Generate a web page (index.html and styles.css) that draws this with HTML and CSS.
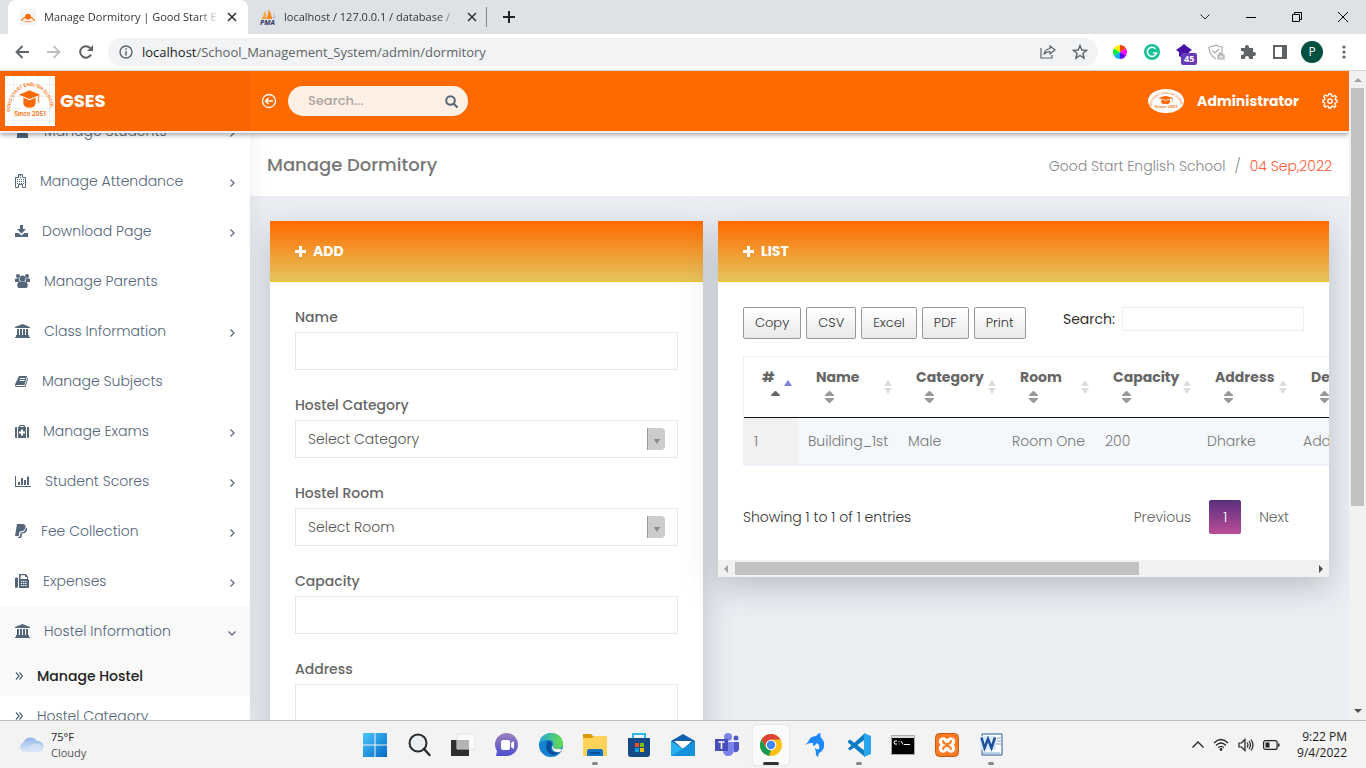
FILE: index.html
```html
<!DOCTYPE html>
<html lang="en">
<head>
<meta charset="utf-8">
<title>Manage Dormitory | Good Start English School</title>
<link rel="stylesheet" href="styles.css">
</head>
<body>
<svg class="defs" aria-hidden="true">
  <defs>
    <symbol id="cap" viewBox="0 0 24 20"><path d="M12 0 24 5 12 10 0 5z"/><path d="M5 8.500 12 11.500 19 8.500V15q-1 5-7 5t-7-5z"/><path d="M22 5.500h1V14h-1z"/></symbol>
    <symbol id="logo" viewBox="0 0 50 50">
      <rect width="50" height="50" fill="#fff"/>
      <path d="M0 8.500H50M0 20.500H50M0 32.500H50M0 44.500H50M8.500 0V50M20.500 0V50M32.500 0V50M44.500 0V50" stroke="#f1f1f1" fill="none"/>
      <path id="arc" d="M5 36A20.500 26 0 0 1 46 36" fill="none"/>
      <text class="logo-text" font-size="4.400"><textPath href="#arc" startOffset="0">GOOD START ENGLISH SCHOOL</textPath></text>
      <svg x="14" y="14" width="21" height="18" fill="#ff6a00"><use href="#cap"/></svg>
      <text class="logo-text" x="25" y="40" font-size="6" text-anchor="middle">Since 2051</text>
    </symbol>
    <symbol id="chev" viewBox="0 0 8 10"><path d="M2.500 1.500 6 5 2.500 8.500" fill="none" stroke="#54667a" stroke-width="1.200"/></symbol>
    <symbol id="dbl" viewBox="0 0 8 8"><path d="M1 .5 4 4 1 7.500M4.500.5l3 3.500-3 3.500" fill="none" stroke="#54667a" stroke-width="1.200"/></symbol>
    <symbol id="bank" viewBox="0 0 15 14"><path d="M7.500 0 15 3v1H0V3zM1 12h13v1h1v1H0v-1h1zM2 5h2v6h1V5h2v6h1V5h2v6h1V5h2v6h1v1H1v-1h1z"/></symbol>
    <symbol id="plus" viewBox="0 0 11 11"><path d="M4 0h3v4h4v3H7v4H4V7H0V4h4z"/></symbol>
    <symbol id="sort" viewBox="0 0 9 12"><path d="M4 0h1l4 4v1H0V4zM0 7h9v1l-4 4H4L0 8z"/></symbol>
    <symbol id="sorts" viewBox="0 0 8 14"><path d="M4 0 8 6H0zM0 8h8l-4 6z"/></symbol>
    <symbol id="x" viewBox="0 0 10 10"><path d="M1 1l8 8M9 1 1 9" stroke="#333" stroke-width="1.600"/></symbol>
  </defs>
</svg>

<div class="tabstrip">
  <div class="tab active">
    <svg width="16" height="16" viewBox="0 0 50 50"><rect width="50" height="50" fill="#f7f5f4"/><path d="M5 37A22 22 0 0 1 45 37" fill="none" stroke="#ff8a3a" stroke-width="5"/><circle cx="25" cy="24" r="9" fill="#ff6a00"/><path d="M14 39h22" stroke="#ffa567" stroke-width="4"/></svg>
    <span class="tab-title">Manage Dormitory | Good Start E</span>
    <button aria-label="Close tab"><svg width="10" height="10"><use href="#x"/></svg></button>
  </div>
  <div class="tab">
    <svg width="16" height="16" viewBox="0 0 16 16"><path d="M1 10Q4 7 5 1q2 5 1 9z" fill="#f9a545"/><path d="M6 10q3-5 2-10 4 5 4 10z" fill="#f68a1f"/><path d="M12 10q2-4 1-7 3 4 3 7z" fill="#c9c9d5"/><text x="0" y="16" class="pma">PMA</text></svg>
    <span class="tab-title">localhost / 127.0.0.1 / database /</span>
    <button aria-label="Close tab"><svg width="10" height="10"><use href="#x"/></svg></button>
  </div>
  <span class="tab-sep"></span>
  <button class="newtab" aria-label="New tab"><svg width="12" height="12" viewBox="0 0 12 12"><path d="M6 0v12M0 6h12" stroke="#222" stroke-width="2"/></svg></button>
  <div class="winctl">
    <button aria-label="Search tabs"><svg width="10" height="6" viewBox="0 0 10 6"><path d="M.5.5 5 5 9.500.5" fill="none" stroke="#222"/></svg></button>
    <button aria-label="Minimize"><svg width="10" height="10"><path d="M0 5.500h10" stroke="#000"/></svg></button>
    <button aria-label="Restore"><svg width="10" height="10" fill="none" stroke="#000"><path d="M.5 2.500h7v7h-7zM2.500 2.500v-2h7v7h-2"/></svg></button>
    <button aria-label="Close"><svg width="10" height="10" viewBox="0 0 10 10"><path d="M0 0l10 10M10 0 0 10" stroke="#000"/></svg></button>
  </div>
</div>

<div class="toolbar">
  <button aria-label="Back"><svg width="14" height="14" viewBox="0 0 14 14" fill="none" stroke="#5f6368" stroke-width="1.800"><path d="M14 7H1.500M7.500 1l-6 6 6 6"/></svg></button>
  <button aria-label="Forward"><svg width="14" height="14" viewBox="0 0 14 14" fill="none" stroke="#bdc0c3" stroke-width="1.800"><path d="M0 7h12.500M6.500 1l6 6-6 6"/></svg></button>
  <button aria-label="Reload"><svg width="14" height="14" viewBox="0 0 14 14"><path d="M12 9.500A5.700 5.700 0 1 1 11.200 3.200" fill="none" stroke="#5f6368" stroke-width="2"/><path d="M14 0v6H8z" fill="#5f6368"/></svg></button>
  <div class="omnibox">
    <svg width="14" height="14" viewBox="0 0 14 14"><circle cx="7" cy="7" r="6" fill="none" stroke="#5f6368" stroke-width="1.400"/><path d="M7 6.200v4.300M7 3.300v1.500" stroke="#5f6368" stroke-width="1.500"/></svg>
    <span class="url"><b>localhost</b>/School_Management_System/admin/dormitory</span>
    <button aria-label="Share"><svg width="16" height="14" viewBox="0 0 16 14" fill="none" stroke="#5f6368" stroke-width="1.200"><path d="M1 3v10h11v-3M10 1l5 4-5 4V6.500Q6 6.500 4 9.500q.5-5 6-6z"/></svg></button>
    <button aria-label="Bookmark"><svg width="16" height="16" viewBox="0 0 16 16"><path d="M8 1.500 9.800 6l4.800.3-3.700 3.100 1.200 4.700L8 11.500l-4.100 2.600 1.200-4.700L1.400 6.300 6.200 6z" fill="none" stroke="#5f6368" stroke-width="1.400"/></svg></button>
  </div>
  <div class="exts">
    <button aria-label="Colour picker"><svg width="16" height="16" viewBox="-8 -8 16 16"><g stroke-width="7" fill="none"><path d="M0-3.500A3.500 3.500 0 0 1 3-1.700" stroke="#e40"/><path d="M3-1.700A3.500 3.500 0 0 1 3 1.700" stroke="#f0f"/><path d="M3 1.700A3.500 3.500 0 0 1 0 3.500" stroke="#60f"/><path d="M0 3.500A3.500 3.500 0 0 1-3 1.700" stroke="#0af"/><path d="M-3 1.700A3.500 3.500 0 0 1-3-1.700" stroke="#0e3"/><path d="M-3-1.700A3.500 3.500 0 0 1 0-3.500" stroke="#fe0"/></g></svg></button>
    <button aria-label="Grammarly"><svg width="16" height="16" viewBox="0 0 16 16"><circle cx="8" cy="8" r="8" fill="#15c39a"/><path d="M11.500 4.800A4.600 4.600 0 1 0 12.500 9H9" fill="none" stroke="#fff" stroke-width="1.500"/></svg></button>
    <button class="counter" aria-label="Extension"><svg width="16" height="16" viewBox="0 0 16 16"><path d="M8 0l3 2.500L16 6l-3 2v4l-5 3-5-3V8L0 6l5-3.500z" fill="#4a10a8"/></svg><span>45</span></button>
    <button aria-label="Shield"><svg width="17" height="16" viewBox="0 0 17 16" fill="none" stroke="#aaa" stroke-width="1.200"><path d="M8 15Q1 11 1 3q4 0 7-2 3 2 6 2v5M4.500 6.500l2.500 2.500 4-4"/><path d="M10 11h6v4h-6zM11.500 11V9h3v2" fill="#ddd"/></svg></button>
    <button aria-label="Extensions"><svg width="16" height="16" viewBox="0 0 16 16" fill="#5f6368"><path d="M1 4h4V3a2 2 0 0 1 4 0v1h4v4h1a2 2 0 0 1 0 4h-1v3H9v-1a2 2 0 0 0-4 0v1H1v-4h1a2 2 0 0 0 0-4H1z"/></svg></button>
    <button aria-label="Side panel"><svg width="14" height="14" viewBox="0 0 14 14"><path d="M0 0h14v14H0zM2 2v10h7V2z" fill="#5f6368" fill-rule="evenodd"/></svg></button>
    <button class="avatar" aria-label="Profile">P</button>
    <button aria-label="Menu"><svg width="4" height="14" viewBox="0 0 4 14" fill="#5f6368"><circle cx="2" cy="2" r="1.600"/><circle cx="2" cy="7" r="1.600"/><circle cx="2" cy="12" r="1.600"/></svg></button>
  </div>
</div>

<div class="viewport">
  <div class="app">
    <header class="topbar">
      <a class="brand" href="#"><svg width="50" height="50"><use href="#logo"/></svg>GSES</a>
      <button class="collapse" aria-label="Toggle menu"><svg width="16" height="16" viewBox="0 0 16 16" fill="none" stroke="#fff" stroke-width="1.300"><circle cx="8" cy="8" r="6.500"/><path d="M12 8H4.500M7.500 5l-3 3 3 3"/></svg></button>
      <form class="find">
        <input type="text" placeholder="Search..." aria-label="Search">
        <button type="button" aria-label="Search"><svg width="13" height="13" viewBox="0 0 13 13" fill="none" stroke="#54667a" stroke-width="2"><circle cx="5.500" cy="5.500" r="4.300"/><path d="M8.700 8.700l4 4"/></svg></button>
      </form>
      <a class="user" href="#"><svg width="36" height="24" viewBox="0 0 50 50" preserveAspectRatio="none"><use href="#logo"/></svg>Administrator</a>
      <button class="gear" aria-label="Settings"><svg width="16" height="16" viewBox="-8 -8 16 16" fill="none" stroke="#fff" stroke-width="1.300"><path d="M-1.300-7h2.600l.5 2 1.400.6L5-5.500 6.500-4 5.100-2.200 5.600-1 7-.7v2l-1.700.4-.6 1.400 1.200 1.800L4.500 6.300 2.700 5.100 1.300 5.600 1 7h-2.200l-.5-1.600L-3 5l-1.700 1.200-1.500-1.500L-5.100 3l-.6-1.400L-7 1.300v-2.200l1.600-.4L-5-2.700-6.200-4.500-4.700-6-3-5l1.300-.4z"/><circle r="2.200"/></svg></button>
    </header>

    <div class="columns">
      <nav class="sidebar">
        <ul>
          <li><a href="#"><svg width="15" height="14" viewBox="0 0 15 14"><circle cx="7.500" cy="4" r="3"/><path d="M2 14q-1-7 5.500-7T13 14z"/></svg>Manage Students<svg class="chev"><use href="#chev"/></svg></a></li>
          <li><a href="#"><svg width="11" height="14" viewBox="0 0 11 14"><path d="M.5 3.500h3v-3h4v3h3v10h-3v-3h-4v3h-3z" fill="none" stroke="#54667a"/><path d="M4.500 2h2M5.500 1v3M2 5.500h7M2 7.500h7M2 9.500h7" fill="none" stroke="#54667a" stroke-dasharray="1 1"/></svg>Manage Attendance<svg class="chev"><use href="#chev"/></svg></a></li>
          <li><a href="#"><svg width="13" height="13" viewBox="0 0 13 13"><path d="M5 0h3v4h3L6.500 8.500 2 4h3zM0 8h3.500l3 2.500 3-2.500H13v4H0z"/></svg>Download Page<svg class="chev"><use href="#chev"/></svg></a></li>
          <li><a href="#"><svg width="15" height="14" viewBox="0 0 15 14"><circle cx="3" cy="2" r="2"/><circle cx="12" cy="2" r="2"/><circle cx="7.500" cy="4.500" r="3"/><path d="M0 8V5q1.500-1 4-.5Q4 7 5 8zM15 8V5q-1.500-1-4-.5Q11 7 10 8zM2.500 13q-1-5 2.500-5.500h5Q13.500 8 12.500 13 12 14 11 14H4q-1 0-1.500-1z"/></svg>Manage Parents</a></li>
          <li><a href="#"><svg width="15" height="14"><use href="#bank"/></svg>Class Information<svg class="chev"><use href="#chev"/></svg></a></li>
          <li><a href="#"><svg width="13" height="13" viewBox="0 0 13 13"><path d="M4 1h8l-2.500 9H2q-1 0-.8 1h8.600L12.500 2.500q1 .5.300 2L10.500 12H1q-1.500-1-.8-3z"/><path d="M5 3.500h5M4.500 5.500h5" stroke="#fff"/></svg>Manage Subjects</a></li>
          <li><a href="#"><svg width="14" height="13" viewBox="0 0 14 13"><path d="M4 2q0-2 1-2h4q1 0 1 2h1v11H3V2zm1.300 0h3.400V1H5.300zM2 2v11H1q-1 0-1-1V3q0-1 1-1zM12 2h1q1 0 1 1v9q0 1-1 1h-1z"/><path d="M7 4.500v6M4 7.500h6" stroke="#fff" stroke-width="2"/></svg>Manage Exams<svg class="chev"><use href="#chev"/></svg></a></li>
          <li><a href="#"><svg width="16" height="13" viewBox="0 0 16 13"><path d="M0 1h1v10h15v1H0zM3 7h2v3H3zM6 3h2v7H6zM9 5h2v5H9zM12 1.500h2V10h-2z"/></svg>Student Scores<svg class="chev"><use href="#chev"/></svg></a></li>
          <li><a href="#"><svg width="12" height="14" viewBox="0 0 12 14"><path d="M2 0h6q3.500.5 2.300 4Q9 7.500 4.500 7.500L3.700 12H0z"/><path d="M11 3.500q2 1 .5 4-1 2-4.500 2L6.300 14H3l.3-1.200h1.500L5.700 8.500Q10 8.500 11 3.500z"/></svg>Fee Collection<svg class="chev"><use href="#chev"/></svg></a></li>
          <li><a href="#"><svg width="14" height="14" viewBox="0 0 14 14"><path d="M0 4q1-1.500 3 0v9q-1 1-2 1t-1-1zM4 0h7l2 2.500V5l1 1v7q0 1-1 1H4zM5.500 1.200V5H12V3h-2V1.200z" fill-rule="evenodd"/><path d="M6 7.500h6M6 9.500h6M6 11.500h6" stroke="#fff" stroke-dasharray="1.300 .8"/></svg>Expenses<svg class="chev"><use href="#chev"/></svg></a></li>
          <li class="open"><a href="#"><svg width="15" height="14"><use href="#bank"/></svg>Hostel Information<svg class="chev"><use href="#chev"/></svg></a>
            <ul>
              <li class="current"><a href="#"><svg width="8" height="8"><use href="#dbl"/></svg>Manage Hostel</a></li>
              <li><a href="#"><svg width="8" height="8"><use href="#dbl"/></svg>Hostel Category</a></li>
            </ul>
          </li>
        </ul>
      </nav>

      <main>
        <div class="titlebar">
          <h1>Manage Dormitory</h1>
          <div class="crumbs"><a href="#">Good Start English School</a><span>/</span><b>04 Sep,2022</b></div>
        </div>
        <div class="cards">
          <section class="card">
            <h2><svg width="11" height="11"><use href="#plus"/></svg>ADD</h2>
            <form class="body">
              <div class="field"><label for="name">Name</label><input id="name" type="text"></div>
              <div class="field"><label for="cat">Hostel Category</label><div class="pick"><select id="cat"><option>Select Category</option></select><i></i></div></div>
              <div class="field"><label for="room">Hostel Room</label><div class="pick"><select id="room"><option>Select Room</option></select><i></i></div></div>
              <div class="field"><label for="capacity">Capacity</label><input id="capacity" type="text"></div>
              <div class="field"><label for="address">Address</label><input id="address" type="text"></div>
            </form>
          </section>
          <section class="card">
            <h2><svg width="11" height="11"><use href="#plus"/></svg>LIST</h2>
            <div class="body list">
              <div class="tools">
                <button>Copy</button><button>CSV</button><button>Excel</button><button>PDF</button><button>Print</button>
                <label for="q">Search:</label><input id="q" type="search">
              </div>
              <table>
                <colgroup><col class="c-num"><col class="c-name"><col class="c-cat"><col class="c-room"><col class="c-cap"><col class="c-addr"><col class="c-desc"></colgroup>
                <thead><tr>
                  <th><div><span>#<svg class="s1 up" viewBox="0 0 9 12"><path d="M4 0h1l4 4v1H0V4z"/></svg></span><svg class="s2 on" viewBox="0 0 8 14"><path d="M4 0 8 6H0z"/></svg></div></th>
                  <th><div><span>Name<svg class="s1"><use href="#sort"/></svg></span><svg class="s2"><use href="#sorts"/></svg></div></th>
                  <th><div><span>Category<svg class="s1"><use href="#sort"/></svg></span><svg class="s2"><use href="#sorts"/></svg></div></th>
                  <th><div><span>Room<svg class="s1"><use href="#sort"/></svg></span><svg class="s2"><use href="#sorts"/></svg></div></th>
                  <th><div><span>Capacity<svg class="s1"><use href="#sort"/></svg></span><svg class="s2"><use href="#sorts"/></svg></div></th>
                  <th><div><span>Address<svg class="s1"><use href="#sort"/></svg></span><svg class="s2"><use href="#sorts"/></svg></div></th>
                  <th><div><span>Description<svg class="s1"><use href="#sort"/></svg></span><svg class="s2"><use href="#sorts"/></svg></div></th>
                </tr></thead>
                <tbody><tr><td>1</td><td>Building_1st</td><td>Male</td><td>Room One</td><td>200</td><td>Dharke</td><td>Address</td></tr></tbody>
              </table>
              <div class="pager">
                <p>Showing 1 to 1 of 1 entries</p>
                <a href="#">Previous</a><a class="page" href="#">1</a><a href="#">Next</a>
              </div>
            </div>
            <div class="hscroll"><svg width="4" height="8" viewBox="0 0 4 8"><path d="M4 0v8L0 4z" fill="#a3a3a3"/></svg><span><i></i></span><svg width="4" height="8" viewBox="0 0 4 8"><path d="M0 0v8l4-4z" fill="#505050"/></svg></div>
          </section>
        </div>
      </main>
    </div>
  </div>
  <div class="vscroll"><svg width="8" height="4" viewBox="0 0 8 4"><path d="M0 4h8L4 0z" fill="#a3a3a3"/></svg><span><i></i></span><svg width="8" height="4" viewBox="0 0 8 4"><path d="M0 0h8L4 4z" fill="#505050"/></svg></div>
</div>

<footer class="taskbar">
  <div class="weather">
    <svg width="25" height="17" viewBox="0 0 25 17"><defs><linearGradient id="cl" x2="0" y2="1"><stop stop-color="#8fb4e8"/><stop offset="1" stop-color="#dfe9f7"/></linearGradient></defs><path d="M5 16A5 5 0 0 1 4.500 6.500 7.500 7.500 0 0 1 18 5a5.500 5.500 0 0 1 2 11z" fill="url(#cl)"/><path d="M12 16q-4-7 3-8 6-1 8 4-.5 4-4 4z" fill="#d8e4f6" opacity=".8"/></svg>
    <p>75°F<small>Cloudy</small></p>
  </div>
  <div class="apps">
    <button aria-label="Start"><svg width="24" height="24" viewBox="0 0 24 24"><defs><linearGradient id="w" x2="1" y2="1"><stop stop-color="#4cc8fb"/><stop offset="1" stop-color="#0068c8"/></linearGradient></defs><path d="M0 0h11.500v11.500H0zM12.500 0H24v11.500H12.500zM0 12.500h11.500V24H0zM12.500 12.500H24V24H12.500z" fill="url(#w)"/></svg></button>
    <button aria-label="Search"><svg width="24" height="24" viewBox="0 0 24 24"><circle cx="11" cy="10" r="8.500" fill="#e9eef2" stroke="#2b2b2b" stroke-width="2"/><path d="M17 16l5.500 6" stroke="#2b2b2b" stroke-width="2.500" stroke-linecap="round"/></svg></button>
    <button aria-label="Task view"><svg width="24" height="24" viewBox="0 0 24 24"><path d="M0 7h18v16H0z" fill="#2d2d2b"/><path d="M6 1h18v15H6z" fill="#fafafa" stroke="#e2e2e2"/><path d="M6 7h12v9H6z" fill="#b4b4b4"/></svg></button>
    <button aria-label="Chat"><svg width="24" height="24" viewBox="0 0 24 24"><defs><linearGradient id="ch" x2="0" y2="1"><stop stop-color="#9b7fbd"/><stop offset="1" stop-color="#4c51d0"/></linearGradient></defs><path d="M1 23l1-5A11.500 11.500 0 1 1 12 23z" fill="url(#ch)"/><rect x="6" y="7" width="9" height="10" rx="2" fill="#fff"/><path d="M16 10l3-2v8l-3-2z" fill="#fff"/></svg></button>
    <button aria-label="Edge"><svg width="24" height="24" viewBox="0 0 24 24"><defs><linearGradient id="e1"><stop stop-color="#25a6dc"/><stop offset="1" stop-color="#67df45"/></linearGradient></defs><circle cx="12" cy="12" r="12" fill="#1380d0"/><path d="M0 11Q2 0 13 0q10 1 11 10 0 6-6 6-5 0-4-4 1-5-5-5-6 0-9 4z" fill="url(#e1)"/><path d="M9 8Q4 15 11 21q6 3 10-2-8 2-9-4 0-3 1-4-1-3-4-3z" fill="#0b4e9c"/><path d="M14 12q-1 4 4 4h5.500L21 19q-8 1-8-5z" fill="#f2f2f2"/></svg></button>
    <button class="run" aria-label="File Explorer"><svg width="24" height="22" viewBox="0 0 24 22"><path d="M0 0h8l2 2h14v20H0z" fill="#d99a0c"/><path d="M0 4h9l2-2h13v20H0z" fill="#ffd35a"/><path d="M4 22v-5q0-2 2-2h12q2 0 2 2v5z" fill="#1670c4"/><path d="M7 18h10v2H7z" fill="#0b4f96"/></svg></button>
    <button aria-label="Store"><svg width="24" height="24" viewBox="0 0 24 24"><path d="M6 6V1h12v5" fill="none" stroke="#2fb9ea" stroke-width="2"/><path d="M1 5h22v16q0 3-3 3H4q-3 0-3-3z" fill="#164a86"/><path d="M8 10h4v4H8z" fill="#f25022"/><path d="M13 10h4v4h-4z" fill="#7fba00"/><path d="M8 15h4v4H8z" fill="#00a4ef"/><path d="M13 15h4v4h-4z" fill="#ffb900"/></svg></button>
    <button aria-label="Mail"><svg width="24" height="24" viewBox="0 0 24 24"><path d="M0 8 12 1l12 7v15H0z" fill="#0f5fae"/><path d="M3 8h18l-9 8z" fill="#fff"/><path d="M0 8l12 8 12-8v15H0z" fill="#28b1ec"/><path d="M0 23l24-15v15z" fill="#1591dc"/></svg></button>
    <button aria-label="Teams"><svg width="24" height="24" viewBox="0 0 24 24"><circle cx="13" cy="4" r="4" fill="#7b83eb"/><circle cx="21" cy="5" r="2.500" fill="#5059c9"/><path d="M8 9h11v8q-1 6-6 6t-5-6z" fill="#7b83eb"/><path d="M19 9h5v7q-1 4-5 3z" fill="#5059c9"/><path d="M0 6h13v12H0z" fill="#464eb8"/><path d="M3.500 9h6M6.500 9v7" stroke="#fff" stroke-width="1.600"/></svg></button>
    <button class="run front" aria-label="Chrome"><svg width="22" height="22" viewBox="0 0 22 22"><circle cx="11" cy="11" r="11" fill="#fbc116"/><path d="M1.500 5.500A11 11 0 0 1 20.500 5.500H11L6.500 14z" fill="#dc4437"/><path d="M1.500 5.500 6.200 13.700 11 16.500 9 21.900A11 11 0 0 1 1.500 5.500z" fill="#1b9a55"/><circle cx="11" cy="11" r="5.300" fill="#fff"/><circle cx="11" cy="11" r="4.200" fill="#4286f5"/></svg></button>
    <button aria-label="Database client"><svg width="20" height="24" viewBox="0 0 20 24"><path d="M0 12l3-3Q5 3 11 3q2-3 5-3-1 2-.5 4Q20 8 19 14q-1 4-5 6l-1 4q-3-2-2-5-1-2-1-4 2 2 4 1 1-4-2-6-2 3-4 3v-3q-4-.5-8 2z" fill="#1e88ff"/></svg></button>
    <button class="run" aria-label="Code editor"><svg width="24" height="24" viewBox="0 0 24 24"><path d="M1 8l2-1.500L18 18v6L1 9.500zM1 15.500 18 0v6.500L3 17.500z" fill="#0a7cc4"/><path d="M17 0l7 3v18l-7 3z" fill="#29a5ec"/></svg></button>
    <button aria-label="Terminal"><svg width="24" height="20" viewBox="0 0 24 20"><path d="M.5.5h23v19H.5z" fill="#000" stroke="#aaa"/><path d="M1 1h22v2H1z" fill="#dcdcdc"/><path d="M6 6q-3-1-3 1.500T6 9M8 6v1M8 8.500v.8M10 6l2 3.500M13 9.500h6" fill="none" stroke="#fff"/></svg></button>
    <button aria-label="XAMPP"><svg width="24" height="24" viewBox="0 0 24 24"><rect x=".5" y=".5" width="23" height="23" rx="4" fill="#fb7a24" stroke="#c65a12"/><path d="M8 8.500l8 7M16 8.500l-8 7" stroke="#fff" stroke-width="8.500" stroke-linecap="round"/><path d="M8 8q.5 3 4 3t4-3M8 16q.5-3 4-3t4 3" fill="none" stroke="#fb7a24" stroke-width="2" stroke-linecap="round"/></svg></button>
    <button class="run" aria-label="Word"><svg width="24" height="24" viewBox="0 0 24 24"><path d="M3 1h20v21H3z" fill="#fff" stroke="#2a5699"/><path d="M18 5h4M18 8h4M17 11h5M4 20h17" stroke="#7ba2d6"/><path d="M1 3h16v14H1z" fill="#dbe8f8"/><path d="M2.500 4.500 5.500 15 9 6l3.500 9 3.500-10.500" fill="none" stroke="#1c519c" stroke-width="2.500"/></svg></button>
  </div>
  <div class="tray">
    <svg width="12" height="7" viewBox="0 0 12 7"><path d="M.5 6.500 6 1l5.500 5.500" fill="none" stroke="#222" stroke-width="1.300"/></svg>
    <svg width="16" height="13" viewBox="0 0 16 13" fill="none" stroke="#222" stroke-width="1.200"><path d="M1 5q7-7 14 0M3 7.500q5-5 10 0M5.200 9.800q2.800-2.800 5.600 0"/><circle cx="8" cy="11.500" r=".8"/></svg>
    <svg width="16" height="14" viewBox="0 0 16 14" fill="none" stroke="#222" stroke-width="1.200"><path d="M1 5h2.500L7 1.500v11L3.500 9H1zM9 4.500q2 2.500 0 5M11 3q3 4 0 8M13 1.500q4 5.500 0 11"/></svg>
    <svg width="17" height="10" viewBox="0 0 17 10"><rect x=".6" y=".6" width="13.500" height="8.800" rx="2" fill="none" stroke="#222" stroke-width="1.200"/><path d="M2.500 2.500h4v5h-4zM15 3.500h1.500v3H15z" fill="#222"/></svg>
    <p>9:22 PM<br>9/4/2022</p>
  </div>
</footer>
</body>
</html>
```
FILE: styles.css
```css
* { box-sizing: border-box; }
body {
  margin: 0;
  height: 100vh;
  display: flex;
  flex-direction: column;
  overflow: hidden;
  font: 300 14px/20px Poppins, Inter, sans-serif;
  color: #313131;
}
button { border: 0; background: none; padding: 0; font: inherit; color: inherit; }
a { color: inherit; text-decoration: none; }
ul { list-style: none; margin: 0; padding: 0; }
p, h1, h2 { margin: 0; }
svg { flex: none; display: block; }
.defs { position: absolute; width: 0; height: 0; }
.logo-text { font-family: Inter, sans-serif; font-weight: 600; fill: #ff6a00; }

/* Browser frame */
.tabstrip, .toolbar, .taskbar { font-family: "Segoe UI", "Open Sans", sans-serif; font-weight: 400; flex: none; display: flex; align-items: center; }
.tabstrip { height: 34px; background: #dee1e6; padding-left: 8px; font-size: 11px; }
.tab { width: 240px; height: 34px; display: flex; align-items: center; gap: 8px; padding: 0 11px 0 12px; color: #33373b; }
.tab.active { background: #fff; border-radius: 8px 8px 0 0; }
.tab-title { flex: 1; overflow: hidden; white-space: nowrap; mask-image: linear-gradient(90deg, #000 88%, transparent); }
.pma { font: italic 700 7px "Open Sans", sans-serif; fill: #336; }
.tab-sep { width: 1px; height: 20px; background: #85888c; margin-left: -2px; }
.newtab { margin-left: 16px; }
.winctl { margin-left: auto; display: flex; }
.winctl button { width: 46px; height: 28px; display: grid; place-items: center; }
.toolbar { height: 37px; padding: 0 6px; border-bottom: 1px solid #d5d7da; background: #fff; }
.toolbar > button, .exts button { width: 32px; display: grid; place-items: center; }
.omnibox { flex: 1; height: 28px; margin: 0 6px; border-radius: 14px; background: #f1f3f4; display: flex; align-items: center; padding: 0 10px 0 11px; gap: 16px; color: #5f6368; }
.url { flex: 1; margin-left: -7px; font-size: 13px; }
.url b { font-weight: 400; color: #202124; }
.exts { display: flex; align-items: center; }
.counter { position: relative; }
.counter span { position: absolute; left: 13px; top: 9px; background: #673ab7; color: #fff; font: 700 9px/12px "Open Sans", sans-serif; padding: 0 3px; border-radius: 2px; }
.exts .avatar { width: 22px; height: 22px; margin: 0 5px; border-radius: 50%; background: #00503f; color: #fff; font-size: 12px; }

/* Page */
.viewport { flex: 1; min-height: 0; display: flex; }
.app { flex: 1; min-width: 0; display: flex; flex-direction: column; overflow: hidden; }
.topbar { flex: none; height: 62px; background: #ff6a00; border-bottom: 2px solid #eee; box-shadow: 0 2px 5px rgba(0, 0, 0, .35); display: flex; align-items: center; color: #fff; z-index: 2; position: relative; padding-right: 11px; }
.brand { width: 250px; height: 60px; display: flex; align-items: center; gap: 5px; padding-left: 5px; background: #f96502; font-size: 18px; font-weight: 700; }
.collapse { margin: 0 11px; }
.find { width: 180px; height: 30px; display: flex; align-items: center; background: #fff0e5; border-radius: 15px; padding: 0 10px 0 20px; }
.find input { flex: 1; min-width: 0; border: 0; background: none; padding: 0; font: 500 13px Poppins, Inter, sans-serif; }
.find input::placeholder { color: #aaa5a3; }
.user { margin-left: auto; display: flex; align-items: center; gap: 13px; font-weight: 700; }
.user svg { border-radius: 50%; }
.gear { margin-left: 23px; }
.columns { flex: 1; min-height: 0; display: flex; overflow: hidden; }

.sidebar { flex: none; width: 250px; background: #fff; box-shadow: 1px 0 20px rgba(0, 0, 0, .08); z-index: 1; color: #54667a; }
.sidebar > ul { margin-top: -27px; }
.sidebar a { height: 50px; display: flex; align-items: center; gap: 14px; padding: 0 14px 0 15px; }
.sidebar svg { fill: #54667a; }
.sidebar .chev { width: 8px; height: 10px; margin: 4px 0 0 auto; }
.open, .current { background: #f9f9f9; }
.open .chev { transform: rotate(90deg); }
.open ul { background: #fff; }
.sidebar ul ul a { height: 40px; }
.current { color: #222; font-weight: 500; }

main { flex: 1; min-width: 0; background: #ebeff4; }
.titlebar { height: 63px; background: #fff; display: flex; align-items: center; justify-content: space-between; padding: 0 17px; }
h1 { font-size: 18px; font-weight: 500; color: #777; }
.crumbs { display: flex; gap: 9px; padding-top: 2px; color: #888; }
.crumbs b { font-weight: 300; color: #ff5a36; }
.cards { display: grid; grid-template-columns: 433fr 611fr; gap: 15px; align-items: start; padding: 25px 20px; }
.card { min-width: 0; background: #fff; box-shadow: 0 10px 30px rgba(60, 70, 80, .28); }
.card h2 { height: 61px; display: flex; align-items: center; gap: 7px; padding-left: 25px; background: linear-gradient(#ff6a00, #e5c45c); border-bottom: 1px solid #f2c21c; color: #fff; font-size: 14px; font-weight: 700; }
.card svg { fill: currentColor; }
.body { padding: 25px; }
.field { margin-bottom: 25px; }
.field label { display: block; margin-bottom: 5px; font-weight: 500; color: #666; }
.field input, .field select { display: block; width: 100%; height: 38px; border: 1px solid #e4e7ea; background: #fff; padding: 0 12px; font: inherit; color: #565656; appearance: none; border-radius: 0; }
.pick { position: relative; }
.pick i { position: absolute; right: 13px; top: 8px; width: 18px; height: 22px; background: #ccc; border-left: 1px solid #999; border-radius: 0 4px 4px 0; display: grid; place-items: center; padding-top: 5px; pointer-events: none; }
.pick i::after { content: ""; border: 3px solid transparent; border-top: 5px solid #888; border-bottom: 0; }

.list { overflow: hidden; height: 278px; }
.tools { display: flex; align-items: flex-start; gap: 5px; }
.tools button { height: 32px; padding: 0 11px; border: 1px solid #999; border-radius: 2px; background: linear-gradient(#fff, #e9e9e9); font-size: 13px; color: #333; }
.tools label { margin-left: auto; font-weight: 400; line-height: 24px; }
.tools input { width: 182px; height: 24px; border: 1px solid #eee; padding: 0; margin-left: 2px; appearance: none; }
table { table-layout: fixed; width: 650px; margin-top: 17px; border-collapse: separate; border-spacing: 0; border: 1px solid #f0f1f7; }
.c-num { width: 54px; }
.c-name { width: 100px; }
.c-cat { width: 104px; }
.c-room { width: 93px; }
.c-cap { width: 102px; }
.c-addr { width: 96px; }
th { height: 61px; padding: 0 6px 0 18px; border-bottom: 1px solid #111; text-align: left; font-weight: 700; color: #666; }
th div { display: flex; align-items: center; justify-content: space-between; }
.s1 { width: 9px; height: 12px; margin: 4px 0 4px 9px; color: #999; }
.s1.up { color: #666; }
.s2 { width: 8px; height: 14px; color: #ddd; }
.s2.on { color: #7a83dc; }
td { height: 47px; padding: 0 10px; background: #f4f8fb; border-bottom: 1px solid #eef0f7; color: #777; }
td:first-child { background: #f1f1f1; }
.pager { display: flex; align-items: center; margin-top: 34px; color: #666; }
.pager p { flex: 1; color: #333; }
.pager a { padding: 0 18px; }
.pager a:last-child { padding-right: 15px; }
.pager .page { padding: 0; width: 32px; line-height: 34px; text-align: center; color: #fff; background: linear-gradient(#582e7c, #bb4e98); border-radius: 2px; }
.hscroll { height: 17px; background: #f1f1f1; display: flex; align-items: center; justify-content: space-between; padding: 0 6px; gap: 7px; }
.hscroll span { flex: 1; }
.hscroll i { display: block; width: 70%; height: 13px; background: #c1c1c1; }
.vscroll { flex: none; width: 17px; background: #f1f1f1; display: flex; flex-direction: column; align-items: center; padding: 7px 0; gap: 6px; }
.vscroll span { flex: 1; }
.vscroll i { display: block; width: 13px; height: 68%; background: #c1c1c1; }

/* Taskbar */
.taskbar { height: 48px; background: #f3f3f3; border-top: 1px solid #bfbfbf; display: grid; grid-template-columns: 1fr auto 1fr; font-size: 11px; line-height: 16px; color: #222; }
.weather { display: flex; align-items: center; gap: 7px; padding-left: 19px; }
.weather small { display: block; font-size: 11px; color: #555; }
.apps { display: flex; }
.apps button { width: 44px; height: 44px; display: grid; place-items: center; position: relative; }
.run::after { content: ""; position: absolute; bottom: 2px; width: 6px; height: 3px; border-radius: 2px; background: #888; }
.apps .front { width: 36px; height: 40px; margin: 2px 4px; background: #fbfbfb; border-radius: 4px; box-shadow: 0 0 2px #ccc; }
.front::after { bottom: 0; width: 16px; background: #333; }
.tray { display: flex; align-items: center; justify-content: flex-end; gap: 9px; padding-right: 19px; font-size: 12px; }
.tray p { text-align: right; margin-left: 8px; }
```
